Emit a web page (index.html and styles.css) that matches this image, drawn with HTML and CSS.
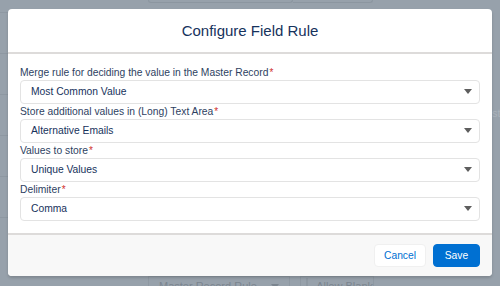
FILE: index.html
```html
<!DOCTYPE html>
<html>
<head>
<meta charset="utf-8">
<link rel="stylesheet" href="styles.css">
</head>
<body>
<div class="backdrop">
  <div class="bg-top"><div class="bg-box"></div><div class="bg-box2"></div></div>
  <div class="bg-rows">
    <div class="bg-row"></div><div class="bg-row"></div><div class="bg-row"></div><div class="bg-row"></div><div class="bg-row"></div><div class="bg-row"></div>
  </div>
  <div class="bg-side">st</div>
  <div class="bg-bottom">
    <div class="bg-select">Master Record Rule <span class="bg-caret"></span></div>
    <div class="bg-check"><span class="bg-box-check"></span>Allow Blank</div>
  </div>
</div>
<div class="modal">
  <div class="modal-header">
    <h2 class="title">Configure Field Rule</h2>
  </div>
  <div class="modal-body">
    <div class="field">
      <label class="label">Merge rule for deciding the value in the Master Record<abbr class="req">*</abbr></label>
      <div class="select"><span>Most Common Value</span><span class="caret"></span></div>
    </div>
    <div class="field">
      <label class="label">Store additional values in (Long) Text Area<abbr class="req">*</abbr></label>
      <div class="select"><span>Alternative Emails</span><span class="caret"></span></div>
    </div>
    <div class="field">
      <label class="label">Values to store<abbr class="req">*</abbr></label>
      <div class="select"><span>Unique Values</span><span class="caret"></span></div>
    </div>
    <div class="field">
      <label class="label">Delimiter<abbr class="req">*</abbr></label>
      <div class="select"><span>Comma</span><span class="caret"></span></div>
    </div>
  </div>
  <div class="modal-footer">
    <button class="btn btn-neutral">Cancel</button>
    <button class="btn btn-brand">Save</button>
  </div>
</div>
</body>
</html>
```
FILE: styles.css
```css
* { box-sizing: border-box; }
html, body { margin: 0; padding: 0; }
body {
  width: 500px;
  height: 286px;
  overflow: hidden;
  background: #97a1ab;
  font-family: "Liberation Sans", Arial, sans-serif;
  position: relative;
}
.backdrop { position: absolute; inset: 0; }
.bg-top { display: flex; padding-left: 148px; }
.bg-box { width: 145px; height: 3px; border: 1px solid #8c96a0; border-top: none; border-radius: 0 0 3px 3px; }
.bg-box2 { width: 80px; height: 3px; border: 1px solid #8c96a0; border-top: none; border-left: none; border-radius: 0 0 3px 0; }
.bg-rows { position: absolute; left: 0; top: 12px; width: 8px; }
.bg-row { height: 41px; border-top: 1px solid #8e98a2; }
.bg-side { position: absolute; left: 492px; top: 107px; font-size: 11px; color: #aab2ba; }
.bg-bottom { position: absolute; left: 148px; top: 276px; display: flex; gap: 10px; font-size: 11px; line-height: 13px; color: #7b858f; white-space: nowrap; }
.bg-select { width: 142px; height: 18px; padding: 3px 10px 0; border-left: 1px solid #8e98a2; border-right: 1px solid #8e98a2; border-top: 1px solid #8e98a2; display: flex; justify-content: space-between; align-items: flex-start; }
.bg-caret { margin-top: 4px; width: 0; height: 0; border-left: 4px solid transparent; border-right: 4px solid transparent; border-top: 5px solid #7b858f; }
.bg-check { display: flex; align-items: flex-start; gap: 8px; width: 74px; height: 18px; border: 1px solid #8e98a2; border-bottom: none; padding: 3px 0 0 5px; }
.bg-box-check { width: 14px; height: 14px; margin-top: -2px; border: 1px solid #8e98a2; }

.modal {
  position: absolute;
  left: 8px;
  top: 9px;
  width: 484px;
  height: 267px;
  background: #fff;
  border-radius: 4px;
  box-shadow: 0 2px 3px rgba(0,0,0,0.16);
  display: flex;
  flex-direction: column;
  overflow: hidden;
}
.modal-header {
  height: 45px;
  border-bottom: 2px solid #dddbda;
  display: flex;
  align-items: center;
  justify-content: center;
}
.title {
  margin: 0;
  font-weight: 400;
  font-size: 15px;
  color: #16325c;
  line-height: 1;
}
.modal-body {
  padding: 11px 12px 12px;
  flex: 1;
}
.field { display: flex; flex-direction: column; }
.label {
  font-size: 10.3px;
  line-height: 15px;
  color: #2e3f62;
}
.req {
  color: #d0312d;
  text-decoration: none;
  font-size: 10px;
  vertical-align: top;
  margin-left: 1px;
}
.select {
  height: 24px;
  border: 1px solid #e3e3e3;
  border-radius: 4px;
  display: flex;
  align-items: center;
  justify-content: space-between;
  padding: 0 7px 0 10px;
  font-size: 10.3px;
  color: #16325c;
}
.caret {
  width: 0; height: 0;
  border-left: 4.5px solid transparent;
  border-right: 4.5px solid transparent;
  border-top: 5px solid #5e5e5e;
}
.modal-footer {
  height: 44px;
  border-top: 2px solid #dddbda;
  background: #f8f8f8;
  display: flex;
  align-items: center;
  justify-content: flex-end;
  gap: 7px;
  padding: 0 12px 0 0;
}
.btn {
  font-family: "Liberation Sans", Arial, sans-serif;
  font-size: 10.3px;
  height: 23px;
  border-radius: 4px;
  padding: 0;
  cursor: pointer;
}
.btn-neutral {
  width: 52px;
  background: #fff;
  border: 1px solid #f0f0f0;
  color: #0070d2;
}
.btn-brand {
  width: 47px;
  background: #0070d2;
  border: 1px solid #0070d2;
  color: #fff;
}
```
